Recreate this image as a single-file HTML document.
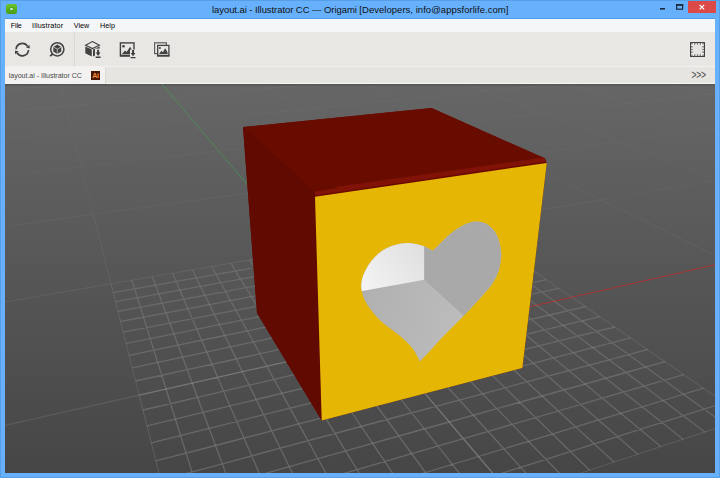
<!DOCTYPE html>
<html><head><meta charset="utf-8"><title>Origami</title>
<style>
html,body{margin:0;padding:0;}
body{width:720px;height:478px;overflow:hidden;background:#67b0fb;font-family:"Liberation Sans",sans-serif;position:relative;}
#frame{position:absolute;left:0;top:0;width:718px;height:476px;border:1px solid #579fe4;}
#title{position:absolute;left:0;top:0;width:720px;height:19px;text-align:center;font-size:9.5px;line-height:19px;color:#111;white-space:nowrap;}
#title span{position:absolute;left:212px;top:0;}
#title b{font-weight:normal;letter-spacing:-0.07px;}#title i{font-style:normal;letter-spacing:0.03px;}
#appicon{position:absolute;left:5.9px;top:4px;width:10.8px;height:10px;border-radius:2.5px;background:linear-gradient(#6cc62c,#4b9d14);}
#appicon i{position:absolute;left:3.7px;top:3.7px;width:3.4px;height:2.6px;background:#bfe9d2;border-radius:1px;box-shadow:0 0 0 1px #4fa51a;}
#close{position:absolute;left:688px;top:1px;width:28px;height:12px;background:#dc4a47;}
#menubar{position:absolute;left:5px;top:19px;width:710px;height:13px;background:#f5f6f7;font-size:7.2px;line-height:14px;color:#000;}
#menubar span{position:absolute;top:0;}
#toolbar{position:absolute;left:5px;top:32px;width:710px;height:34px;background:#e9e7e4;border-bottom:1px solid #f1f0ee;}
#tabbar{position:absolute;left:5px;top:67px;width:710px;height:16px;background:#e7e5e2;border-bottom:1px solid #f6f6f5;}
#tab{position:absolute;left:0;top:0;width:100px;height:17px;background:#f3f2f0;border-right:1px solid #dcdad7;font-size:7px;line-height:18px;color:#474747;}
#tab span{position:absolute;left:3.7px;top:0;white-space:nowrap;}
#ai{position:absolute;left:85.9px;top:4px;width:9.2px;height:8.8px;background:#4a1300;color:#f58c3c;font-size:7px;line-height:9.4px;text-align:center;font-weight:bold;letter-spacing:-0.2px;}
#more{position:absolute;left:686.6px;top:-0.9px;font-size:8.6px;line-height:16px;color:#4a4a4a;letter-spacing:-0.35px;transform:scale(1,1.5);transform-origin:50% 50%;}
#view{position:absolute;left:5px;top:84px;width:710px;height:388.5px;overflow:hidden;}
#mline{position:absolute;left:5px;top:18px;width:710px;height:1px;background:#4f9deb;}
#view svg{display:block;}
.sep{position:absolute;left:69px;top:1px;width:1px;height:33px;background:#d9d7d4;}
</style></head><body>
<div id="frame"></div>
<div id="title"><span><b>layout.ai - Illustrator CC — Origami </b><i>[Developers, info@appsforlife.com]</i></span></div>
<div id="appicon"><i></i></div>
<svg style="position:absolute;left:655px;top:0" width="65" height="19" viewBox="655 0 65 19">
<rect x="688" y="1" width="28" height="12" fill="#dc4a47"/>
<path d="M699.6 4.9l4.5 4.5M704.1 4.9l-4.5 4.5" stroke="#fff" stroke-width="1.25" fill="none"/>
<rect x="660" y="8" width="5" height="1.6" fill="#1a2a3a"/>
<rect x="676.6" y="4.6" width="6" height="4.6" fill="none" stroke="#1a2a3a" stroke-width="1.2"/><rect x="676" y="4" width="7.2" height="1.8" fill="#1a2a3a"/>
</svg>
<div id="mline"></div>
<div id="menubar"><span style="left:5.8px;letter-spacing:-0.18px">File</span><span style="left:27px;letter-spacing:0.16px">Illustrator</span><span style="left:68.8px">View</span><span style="left:95px;letter-spacing:0.05px">Help</span></div>
<div id="toolbar"><div class="sep"></div>
<svg style="position:absolute;left:0;top:0" width="710" height="34" viewBox="5 32 710 34">
<g fill="none" stroke="#424242" stroke-width="1.7">
<path d="M16.1,49.2A6.2,6.2 0 0 1 27.6,46.4"/>
<path d="M28.5,50A6.2,6.2 0 0 1 17,52.8"/>
<circle cx="57.3" cy="49.3" r="6.6" stroke-width="1.5"/>
<path d="M52.6,54L50.2,56.2" stroke-width="1.8"/>
</g>
<g fill="#424242">
<polygon points="26,47.6 29.7,44.9 29.7,48.6"/>
<polygon points="18.7,51.5 15,54.2 15,50.5"/>
<!-- cube in magnifier -->
<polygon points="57.3,44.6 61.3,46.9 61.3,51.6 57.3,54 53.3,51.6 53.3,46.9"/>
</g>
<path d="M53.6,47.1L57.3,49.2L61,47.1M57.3,49.2V53.8" stroke="#e9e7e4" stroke-width="0.7" fill="none"/>
<!-- icon3 cube+download -->
<g>
<path d="M92.4,41.6L99.4,45.2L92.4,48.6L85.6,45.2Z" fill="none" stroke="#424242" stroke-width="1.1"/>
<polygon points="85.3,46.5 91.8,49.6 91.8,56.6 85.3,53.2" fill="#424242"/>
<polygon points="93,49.6 99.6,46.5 99.6,53.2 93,56.6" fill="#424242"/>
<rect x="95" y="48.6" width="6.2" height="9.8" fill="#e9e7e4"/>
<path d="M97.1,49.7H99.1V52.6H100.5L98.1,55.9L95.7,52.6H97.1ZM95.6,56.6H100.6V58H95.6Z" fill="#3f3f3f"/>
</g>
<!-- icon4 image+download -->
<g>
<rect x="120.4" y="42.9" width="13.6" height="13" fill="none" stroke="#424242" stroke-width="1.4"/>
<rect x="120" y="54.6" width="14.6" height="1.9" fill="#424242"/>
<circle cx="123.5" cy="46.3" r="1.3" fill="#424242"/>
<path d="M122,54L125,50.6L126.6,52L130.2,46.8L133,52V54Z" fill="#424242"/>
<rect x="130" y="49.6" width="6" height="9" fill="#e9e7e4"/>
<path d="M132.05,50.1H134.05V53H135.45L133.05,56.3L130.65,53H132.05ZM130.6,56.9H135.5V58.3H130.6Z" fill="#3f3f3f"/>
</g>
<!-- icon5 images -->
<g>
<rect x="154.6" y="42.8" width="11.8" height="10.8" fill="none" stroke="#5e5e5e" stroke-width="1.2"/>
<rect x="157.2" y="44.9" width="12.4" height="11.6" fill="#e9e7e4"/>
<rect x="157.7" y="45.4" width="11.2" height="10.4" fill="none" stroke="#424242" stroke-width="1.3"/>
<rect x="157.1" y="54.8" width="12.4" height="1.7" fill="#424242"/>
<circle cx="159.9" cy="47.9" r="1" fill="#424242"/>
<path d="M159,54L161.4,50.8L162.8,52.2L165.2,48.2L167.6,52.6V54Z" fill="#424242"/>
</g>
<!-- right: marquee icon -->
<g>
<rect x="690.6" y="42.6" width="13.8" height="13.8" fill="#e6e4e1" stroke="#3e3e3e" stroke-width="1.15"/>
<rect x="691.9" y="43.9" width="11.2" height="11.2" fill="none" stroke="#fbfbfb" stroke-width="1.3"/>
<rect x="691.9" y="43.9" width="11.2" height="11.2" fill="none" stroke="#4a4a4a" stroke-width="1.2" stroke-dasharray="1.4 1.4" stroke-dashoffset="0.7"/>
</g>
</svg>

</div>
<div id="tabbar"><div id="tab"><span>layout.ai - Illustrator CC</span><div id="ai">Ai</div></div><div id="more">&gt;&gt;&gt;</div></div>
<div id="view">
<svg id="scene" width="710" height="389" viewBox="5 84 710 389">
<defs><linearGradient id="bg" x1="0" y1="0" x2="0" y2="1"><stop offset="0" stop-color="#666666"/><stop offset="1" stop-color="#464646"/></linearGradient>
<linearGradient id="fx" gradientUnits="userSpaceOnUse" x1="5" y1="0" x2="715" y2="0"><stop offset="0" stop-color="#fff"/><stop offset="0.82" stop-color="#fff"/><stop offset="1" stop-color="#333"/></linearGradient>
<mask id="gm" maskUnits="userSpaceOnUse" x="5" y="84" width="710" height="389"><rect x="5" y="84" width="710" height="389" fill="url(#fx)"/></mask></defs>
<rect x="5" y="84" width="710" height="389" fill="url(#bg)"/><rect x="5" y="84" width="710" height="1.6" fill="#565656"/>
<path d="M5494.7,-2093.1L-21465.2,7785.1M93.3,214.3L81.3,166.8M81.3,166.8L72.5,132.3M72.5,132.3L65.8,106.1M65.8,106.1L60.6,85.4M60.6,85.4L56.4,68.8M392.0,173.0L339.7,136.9M339.7,136.9L300.3,109.6M300.3,109.6L269.4,88.3M269.4,88.3L244.6,71.1M601.1,199.7L512.6,156.4M512.6,156.4L447.3,124.5M447.3,124.5L397.3,100.0M397.3,100.0L357.7,80.6M357.7,80.6L325.5,64.8M858.2,232.5L718.5,179.6M718.5,179.6L618.6,141.7M618.6,141.7L543.6,113.3M543.6,113.3L485.2,91.2M485.2,91.2L438.5,73.5M820.4,162.1L712.5,128.8M712.5,128.8L630.1,103.3M630.1,103.3L565.2,83.3M565.2,83.3L512.7,67.0M796.3,117.2L708.4,94.3M708.4,94.3L638.3,76.0M779.5,86.0L705.4,69.3M601.1,199.7L718.5,179.6M718.5,179.6L820.4,162.1M392.0,173.0L512.6,156.4M512.6,156.4L618.6,141.7M618.6,141.7L712.5,128.8M712.5,128.8L796.3,117.2M-75.9,185.0L81.3,166.8M81.3,166.8L218.6,150.9M218.6,150.9L339.7,136.9M339.7,136.9L447.3,124.5M447.3,124.5L543.6,113.3M543.6,113.3L630.1,103.3M630.1,103.3L708.4,94.3M708.4,94.3L779.5,86.0M-62.4,145.7L72.5,132.3M72.5,132.3L192.6,120.3M192.6,120.3L300.3,109.6M300.3,109.6L397.3,100.0M397.3,100.0L485.2,91.2M485.2,91.2L565.2,83.3M565.2,83.3L638.3,76.0M-52.3,116.4L65.8,106.1M65.8,106.1L172.5,96.7M172.5,96.7L269.4,88.3M269.4,88.3L357.7,80.6M357.7,80.6L438.5,73.5M-44.6,93.6L60.6,85.4M60.6,85.4L156.6,78.0" stroke="#cfcfcf" stroke-opacity="0.04" stroke-width="1.15" fill="none"/>
<path d="M253.7,192.2L392.0,173.0" stroke="#cfcfcf" stroke-opacity="0.05" stroke-width="1.15" fill="none"/>
<path d="M464.5,223.1L392.0,173.0M728.2,261.9L601.1,199.7M464.5,223.1L601.1,199.7M-94.8,240.3L93.3,214.3M93.3,214.3L253.7,192.2" stroke="#cfcfcf" stroke-opacity="0.06" stroke-width="1.15" fill="none"/>
<path d="M9167.3,-4376.8L-5420.1,2463.4" stroke="#cfcfcf" stroke-opacity="0.07" stroke-width="1.15" fill="none"/>
<path d="M111.0,283.8L93.3,214.3M303.5,250.8L464.5,223.1" stroke="#cfcfcf" stroke-opacity="0.08" stroke-width="1.15" fill="none"/>
<path d="M571.8,297.3L464.5,223.1M111.0,283.8L303.5,250.8" stroke="#cfcfcf" stroke-opacity="0.09" stroke-width="1.15" fill="none"/>
<path d="M9167.3,-4376.8L-47801.4,31046.6M-123.5,324.0L111.0,283.8" stroke="#cfcfcf" stroke-opacity="0.1" stroke-width="1.15" fill="none"/>
<path d="M139.2,395.1L111.0,283.8" stroke="#cfcfcf" stroke-opacity="0.11" stroke-width="1.15" fill="none"/>
<path d="M746.7,418.1L571.8,297.3" stroke="#cfcfcf" stroke-opacity="0.12" stroke-width="1.15" fill="none"/>
<path d="M-172.0,465.5L139.2,395.1M139.2,395.1L380.0,340.6" stroke="#cfcfcf" stroke-opacity="0.13" stroke-width="1.15" fill="none"/>
<path d="M512.1,495.9L380.0,340.6M512.1,495.9L746.7,418.1" stroke="#cfcfcf" stroke-opacity="0.14" stroke-width="1.15" fill="none"/>
<path d="M191.8,602.2L139.2,395.1" stroke="#cfcfcf" stroke-opacity="0.15" stroke-width="1.15" fill="none"/>
<path d="M380.0,340.6L1503.3,86.6" stroke="#c62a2a" stroke-opacity="0.75" stroke-width="1" fill="none"/>
<path d="M380.0,340.6L93.7,4.0" stroke="#44a055" stroke-opacity="0.65" stroke-width="1" fill="none"/>
<path d="M419.5,246.9L403.4,233.6M435.7,244.0L419.1,230.9M451.6,241.2L434.5,228.3M451.6,241.2L482.5,235.6M411.3,240.1L442.9,234.6M467.2,238.3L449.6,225.7M442.9,234.6L473.4,229.2" stroke="#d0d0d0" stroke-opacity="0.14" stroke-width="1.3" fill="none"/>
<path d="M334.2,262.3L320.9,247.8M351.9,259.1L338.0,244.8M369.2,256.0L354.8,242.0M386.3,252.9L371.3,239.1M403.0,249.9L387.5,236.4M480.0,262.6L512.4,256.2M437.0,261.4L419.5,246.9M470.1,255.1L502.1,249.1M453.7,258.2L435.7,244.0M428.1,254.0L460.6,248.0M460.6,248.0L492.1,242.2M386.3,252.9L419.5,246.9M470.1,255.1L451.6,241.2M419.5,246.9L451.6,241.2M309.7,258.0L344.8,251.8M344.8,251.8L378.6,245.9M506.9,267.0L486.2,252.1M378.6,245.9L411.3,240.1M486.2,252.1L467.2,238.3" stroke="#d0d0d0" stroke-opacity="0.15" stroke-width="1.3" fill="none"/>
<path d="M179.9,290.1L172.6,273.2M200.5,286.4L192.4,269.8M220.7,282.8L211.8,266.5M240.6,279.2L230.8,263.2M260.0,275.7L249.5,260.0M279.1,272.3L267.8,256.9M297.8,268.9L285.8,253.8M348.6,278.2L334.2,262.3M367.0,274.7L351.9,259.1M385.0,271.3L369.2,256.0M501.1,278.5L534.6,271.5M402.6,267.9L386.3,252.9M456.1,277.2L490.3,270.3M490.3,270.3L523.3,263.7M420.0,264.6L403.0,249.9M446.3,269.1L480.0,262.6M456.1,277.2L437.0,261.4M402.6,267.9L437.0,261.4M437.0,261.4L470.1,255.1M322.9,273.5L359.2,266.8M359.2,266.8L394.3,260.3M473.4,273.7L453.7,258.2M394.3,260.3L428.1,254.0M279.1,272.3L316.1,265.6M316.1,265.6L351.9,259.1M351.9,259.1L386.3,252.9M490.3,270.3L470.1,255.1M155.6,285.1L196.3,277.9M196.3,277.9L235.6,271.0M235.6,271.0L273.3,264.4M273.3,264.4L309.7,258.0M529.6,283.3L506.9,267.0" stroke="#d0d0d0" stroke-opacity="0.16" stroke-width="1.3" fill="none"/>
<path d="M137.4,297.8L131.9,280.2M158.9,293.9L152.4,276.7M209.5,304.6L200.5,286.4M230.6,300.6L220.7,282.8M251.3,296.7L240.6,279.2M271.5,292.8L260.0,275.7M291.4,289.1L279.1,272.3M310.8,285.4L297.8,268.9M364.4,295.6L348.6,278.2M524.2,295.9L558.8,288.3M383.5,291.8L367.0,274.7M477.0,294.5L512.4,287.0M512.4,287.0L546.4,279.7M402.2,288.0L385.0,271.3M430.1,293.1L466.3,285.6M466.3,285.6L501.1,278.5M383.5,291.8L420.5,284.3M420.5,284.3L402.6,267.9M420.5,284.3L456.1,277.2M337.3,290.4L375.0,283.0M458.7,298.4L438.5,280.7M375.0,283.0L411.4,276.0M438.5,280.7L420.0,264.6M411.4,276.0L446.3,269.1M291.4,289.1L329.9,281.8M329.9,281.8L367.0,274.7M477.0,294.5L456.1,277.2M367.0,274.7L402.6,267.9M204.9,295.3L245.8,287.7M245.8,287.7L285.1,280.5M285.1,280.5L322.9,273.5M494.9,290.7L473.4,273.7M115.5,301.7L158.9,293.9M158.9,293.9L200.5,286.4M200.5,286.4L240.6,279.2M240.6,279.2L279.1,272.3M536.6,305.2L512.4,287.0M512.4,287.0L490.3,270.3M113.2,292.6L155.6,285.1M554.4,301.2L529.6,283.3" stroke="#d0d0d0" stroke-opacity="0.17" stroke-width="1.3" fill="none"/>
<path d="M143.5,317.2L137.4,297.8M166.0,312.9L158.9,293.9M187.9,308.7L179.9,290.1M219.4,324.7L209.5,304.6M241.4,320.3L230.6,300.6M263.0,315.9L251.3,296.7M284.2,311.7L271.5,292.8M304.9,307.5L291.4,289.1M563.4,325.4L599.7,316.6M325.1,303.5L310.8,285.4M549.7,315.0L585.4,306.7M381.9,314.7L364.4,295.6M450.6,312.0L488.2,303.8M488.2,303.8L524.2,295.9M401.7,310.5L383.5,291.8M401.7,310.5L440.1,302.3M440.1,302.3L477.0,294.5M353.1,309.0L392.4,300.9M421.1,306.4L402.2,288.0M392.4,300.9L430.1,293.1M304.9,307.5L345.0,299.5M345.0,299.5L383.5,291.8M440.1,302.3L420.5,284.3M214.3,314.4L257.0,306.1M257.0,306.1L298.0,298.1M298.0,298.1L337.3,290.4M481.0,317.8L458.7,298.4M120.5,321.5L166.0,312.9M166.0,312.9L209.5,304.6M209.5,304.6L251.3,296.7M251.3,296.7L291.4,289.1M500.0,313.5L477.0,294.5M118.0,311.4L162.3,303.2M162.3,303.2L204.9,295.3M518.5,309.3L494.9,290.7M563.4,325.4L536.6,305.2M581.8,320.9L554.4,301.2" stroke="#d0d0d0" stroke-opacity="0.18" stroke-width="1.3" fill="none"/>
<path d="M150.2,338.6L143.5,317.2M173.8,333.8L166.0,312.9M196.8,329.2L187.9,308.7M230.3,346.9L219.4,324.7M253.5,342.0L241.4,320.3M609.1,359.8L647.4,349.5M276.1,337.2L263.0,315.9M593.0,347.7L630.6,337.9M298.2,332.5L284.2,311.7M539.1,345.9L577.8,336.2M577.8,336.2L614.8,327.0M319.8,327.9L304.9,307.5M525.4,334.5L563.4,325.4M340.9,323.4L325.1,303.5M473.4,332.9L512.3,323.7M512.3,323.7L549.7,315.0M401.1,335.9L381.9,314.7M370.6,329.6L411.5,320.6M411.5,320.6L450.6,312.0M319.8,327.9L361.6,319.0M421.8,331.2L401.7,310.5M361.6,319.0L401.7,310.5M224.7,335.5L269.4,326.3M269.4,326.3L312.1,317.5M312.1,317.5L353.1,309.0M441.9,326.6L421.1,306.4M126.1,343.4L173.8,333.8M173.8,333.8L219.4,324.7M219.4,324.7L263.0,315.9M263.0,315.9L304.9,307.5M485.6,344.1L461.7,322.2M461.7,322.2L440.1,302.3M123.2,332.2L169.8,323.1M169.8,323.1L214.3,314.4M505.7,339.3L481.0,317.8M525.4,334.5L500.0,313.5M573.5,352.7L544.6,329.9M544.6,329.9L518.5,309.3M593.0,347.7L563.4,325.4M645.8,367.0L612.0,342.7M612.0,342.7L581.8,320.9" stroke="#d0d0d0" stroke-opacity="0.19" stroke-width="1.3" fill="none"/>
<path d="M157.7,362.4L150.2,338.6M182.5,357.1L173.8,333.8M663.1,400.5L703.4,388.2M206.7,352.0L196.8,329.2M644.0,386.1L683.7,374.6M242.5,371.7L230.3,346.9M585.1,384.0L626.0,372.5M626.0,372.5L665.0,361.7M266.8,366.2L253.5,342.0M568.9,370.6L609.1,359.8M290.5,360.9L276.1,337.2M512.3,368.6L553.6,357.9M553.6,357.9L593.0,347.7M313.7,355.6L298.2,332.5M498.6,356.0L539.1,345.9M336.3,350.5L319.8,327.9M444.0,354.2L485.6,344.1M485.6,344.1L525.4,334.5M358.4,345.5L340.9,323.4M389.9,352.3L432.6,342.4M432.6,342.4L473.4,332.9M400.5,364.7L380.0,340.6M336.3,350.5L380.0,340.6M236.3,359.0L283.1,348.7M283.1,348.7L327.8,338.9M422.5,359.4L401.1,335.9M327.8,338.9L370.6,329.6M132.3,367.8L182.5,357.1M182.5,357.1L230.3,346.9M230.3,346.9L276.1,337.2M276.1,337.2L319.8,327.9M444.0,354.2L421.8,331.2M129.1,355.3L178.0,345.2M178.0,345.2L224.7,335.5M465.1,349.1L441.9,326.6M512.3,368.6L485.6,344.1M533.2,363.2L505.7,339.3M585.1,384.0L553.6,357.9M553.6,357.9L525.4,334.5M605.8,378.2L573.5,352.7M663.1,400.5L626.0,372.5M626.0,372.5L593.0,347.7M683.5,394.3L645.8,367.0" stroke="#d0d0d0" stroke-opacity="0.2" stroke-width="1.3" fill="none"/>
<path d="M166.0,389.0L157.7,362.4M640.1,429.4L683.4,415.7M683.4,415.7L724.4,402.7M192.2,383.1L182.5,357.1M620.6,413.3L663.1,400.5M230.0,405.9L217.7,377.3M217.7,377.3L206.7,352.0M558.4,411.0L602.3,398.2M602.3,398.2L644.0,386.1M256.2,399.5L242.5,371.7M542.1,396.0L585.1,384.0M281.8,393.4L266.8,366.2M482.5,393.8L526.8,381.9M526.8,381.9L568.9,370.6M306.7,387.3L290.5,360.9M423.4,391.6L468.9,379.8M468.9,379.8L512.3,368.6M331.0,381.5L313.7,355.6M364.8,389.5L411.6,377.8M411.6,377.8L456.1,366.6M456.1,366.6L498.6,356.0M306.7,387.3L354.7,375.7M354.7,375.7L336.3,350.5M354.7,375.7L400.5,364.7M400.5,364.7L444.0,354.2M197.5,397.3L249.2,385.2M249.2,385.2L298.4,373.7M399.7,397.8L377.9,370.2M298.4,373.7L345.3,362.8M377.9,370.2L358.4,345.5M345.3,362.8L389.9,352.3M139.2,395.1L192.2,383.1M192.2,383.1L242.5,371.7M242.5,371.7L290.5,360.9M423.4,391.6L400.5,364.7M290.5,360.9L336.3,350.5M135.7,381.0L187.2,369.7M187.2,369.7L236.3,359.0M446.4,385.7L422.5,359.4M468.9,379.8L444.0,354.2M519.8,402.2L490.9,374.1M490.9,374.1L465.1,349.1M542.1,396.0L512.3,368.6M598.5,420.0L563.9,389.9M563.9,389.9L533.2,363.2M620.6,413.3L585.1,384.0M683.2,439.2L642.1,406.8M642.1,406.8L605.8,378.2M704.9,432.0L663.1,400.5M726.1,425.0L683.5,394.3" stroke="#d0d0d0" stroke-opacity="0.21" stroke-width="1.3" fill="none"/>
<path d="M175.4,419.0L166.0,389.0M594.3,443.9L640.1,429.4M215.5,445.5L203.1,412.4M203.1,412.4L192.2,383.1M528.5,441.3L575.8,426.9M575.8,426.9L620.6,413.3M244.0,438.1L230.0,405.9M512.2,424.4L558.4,411.0M271.7,430.9L256.2,399.5M449.2,422.0L496.9,408.6M496.9,408.6L542.1,396.0M298.7,423.9L281.8,393.4M386.8,419.5L435.9,406.3M435.9,406.3L482.5,393.8M325.0,417.1L306.7,387.3M325.0,417.1L375.4,404.0M375.4,404.0L423.4,391.6M209.1,428.4L263.7,414.7M263.7,414.7L315.6,401.8M350.5,410.5L331.0,381.5M315.6,401.8L364.8,389.5M147.0,425.9L203.1,412.4M203.1,412.4L256.2,399.5M256.2,399.5L306.7,387.3M375.4,404.0L354.7,375.7M143.0,410.0L197.5,397.3M424.4,428.9L399.7,397.8M449.2,422.0L423.4,391.6M473.3,415.2L446.4,385.7M528.5,441.3L496.9,408.6M496.9,408.6L468.9,379.8M552.5,434.0L519.8,402.2M614.1,462.1L575.8,426.9M575.8,426.9L542.1,396.0M637.8,454.2L598.5,420.0M660.8,446.6L620.6,413.3" stroke="#d0d0d0" stroke-opacity="0.22" stroke-width="1.3" fill="none"/>
<path d="M198.3,492.1L186.1,453.1M186.1,453.1L175.4,419.0M494.7,475.5L546.0,459.3M546.0,459.3L594.3,443.9M229.6,483.4L215.5,445.5M478.5,456.5L528.5,441.3M259.9,474.9L244.0,438.1M411.7,453.7L463.4,438.6M463.4,438.6L512.2,424.4M289.3,466.7L271.7,430.9M289.3,466.7L345.6,450.9M345.6,450.9L398.8,436.0M398.8,436.0L449.2,422.0M160.9,480.3L222.3,463.8M222.3,463.8L280.2,448.2M317.9,458.7L298.7,423.9M280.2,448.2L335.0,433.5M335.0,433.5L386.8,419.5M155.9,460.9L215.5,445.5M215.5,445.5L271.7,430.9M345.6,450.9L325.0,417.1M271.7,430.9L325.0,417.1M151.3,442.8L209.1,428.4M372.6,443.4L350.5,410.5M425.5,472.5L398.8,436.0M398.8,436.0L375.4,404.0M452.4,464.4L424.4,428.9M478.5,456.5L449.2,422.0M538.8,487.1L503.9,448.8M503.9,448.8L473.3,415.2M564.6,478.5L528.5,441.3M589.7,470.2L552.5,434.0" stroke="#d0d0d0" stroke-opacity="0.23" stroke-width="1.3" fill="none"/>
<path d="M440.3,492.7L494.7,475.5M369.3,489.6L425.5,472.5M425.5,472.5L478.5,456.5M278.2,517.2L259.9,474.9M299.1,486.5L357.1,469.6M357.1,469.6L411.7,453.7M309.5,507.7L289.3,466.7M229.6,483.4L289.3,466.7M339.9,498.5L317.9,458.7M369.3,489.6L345.6,450.9M397.8,480.9L372.6,443.4M456.2,514.5L425.5,472.5M484.6,505.1L452.4,464.4M512.1,495.9L478.5,456.5" stroke="#d0d0d0" stroke-opacity="0.24" stroke-width="1.3" fill="none"/>
<polygon points="243.0,127.0 431.5,108.0 545.2,158.6 546.8,162.9 522.4,368.0 321.7,420.5 257.0,313.0" fill="#640b00"/>
<polygon points="243.0,127.0 431.5,108.0 545.2,158.6 315.0,192.2" fill="#690c00"/>
<polygon points="243.0,127.0 315.0,192.2 315.0,196.7 321.7,420.5 257.0,313.0" fill="#600a01"/>
<polygon points="315.0,196.9 315.0,191.6 337.0,188.2 337.0,186.7 543.8,157.4 546.8,162.9" fill="#801306"/>
<polygon points="315.0,196.9 315.0,195.2 546.2,161.4 546.8,162.9" fill="#6a0900"/>
<polygon points="315.0,196.7 546.8,162.9 522.4,368.0 321.7,420.5" fill="#e5b704"/>
<clipPath id="hc"><path d="M432.9,251C433.9,250.0 436.6,247.2 438.7,245.1C440.8,243.0 442.9,240.7 445.4,238.4C447.9,236.1 450.9,233.4 453.6,231.3C456.4,229.2 459.1,227.4 461.9,225.9C464.6,224.4 467.3,223.2 470.1,222.5C472.9,221.8 475.8,221.4 478.6,221.7C481.4,222.0 484.5,222.8 487.0,224.2C489.5,225.6 491.8,227.9 493.6,230.1C495.4,232.3 496.7,234.8 497.8,237.6C498.9,240.4 499.7,243.9 500.3,246.8C500.9,249.7 501.2,252.1 501.2,255.2C501.1,258.3 500.6,262.1 500.0,265.2C499.4,268.3 498.7,270.8 497.6,273.6C496.5,276.4 494.8,279.7 493.4,282.0C492.0,284.3 491.4,285.1 489.5,287.4C487.6,289.7 484.6,292.9 482.0,295.9C479.4,298.8 476.8,301.8 473.7,305.1C470.6,308.5 467.0,312.5 463.6,316.0C460.2,319.5 456.9,322.7 453.6,326.0C450.3,329.3 447.0,332.5 443.6,336.0C440.2,339.5 436.6,343.5 433.5,346.9C430.4,350.2 427.4,353.6 425.1,356.1C422.8,358.6 420.7,360.8 419.8,361.7C419.4,360.9 418.7,359.0 417.6,357.0C416.6,355.0 415.3,352.2 413.5,349.7C411.7,347.2 409.5,344.6 406.8,342.0C404.1,339.4 400.8,336.6 397.5,334.0C394.2,331.4 390.3,329.0 386.9,326.1C383.4,323.2 379.7,320.0 376.8,316.9C373.9,313.8 371.4,310.6 369.3,307.7C367.2,304.8 365.6,302.1 364.3,299.3C363.1,296.5 362.3,293.5 361.8,290.9C361.3,288.2 361.1,286.0 361.4,283.4C361.7,280.8 362.2,278.0 363.4,275.0C364.6,272.0 366.4,268.2 368.4,265.2C370.3,262.2 372.6,259.3 375.1,256.8C377.6,254.3 380.7,251.9 383.5,250.1C386.3,248.3 389.0,247.1 391.8,246.0C394.6,244.9 397.4,244.3 400.2,243.8C403.0,243.3 405.8,243.0 408.6,243.1C411.4,243.2 414.4,243.7 417.0,244.3C419.6,244.9 421.9,245.4 424.5,246.5C427.1,247.6 431.5,250.2 432.9,251.0Z"/></clipPath>
<g clip-path="url(#hc)">
<linearGradient id="fl" gradientUnits="userSpaceOnUse" x1="362" y1="300" x2="460" y2="320"><stop offset="0" stop-color="#b0b0b0"/><stop offset="1" stop-color="#bcbcbc"/></linearGradient>
<linearGradient id="ww" gradientUnits="userSpaceOnUse" x1="365" y1="290" x2="424" y2="245"><stop offset="0" stop-color="#f3f3f3"/><stop offset="1" stop-color="#dfdfdf"/></linearGradient>
<rect x="350" y="210" width="170" height="160" fill="url(#fl)"/>
<polygon points="340.0,200.0 424.3,200.0 424.3,279.7 340.0,295.1" fill="url(#ww)"/>
<polygon points="424.3,200.0 520.0,200.0 520.0,367.3 424.3,279.7" fill="#a9a9a9"/>
</g>
</svg>
</div>
</body></html>
